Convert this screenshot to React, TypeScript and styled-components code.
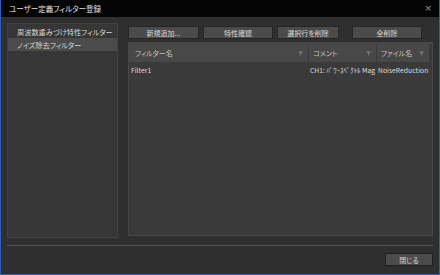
import React from 'react';
import styled, { createGlobalStyle } from 'styled-components';

const Global = createGlobalStyle`
  html, body { margin: 0; padding: 0; background: #2e2e2e; }
  * { box-sizing: border-box; }
  body {
    font-family: "Noto Sans CJK JP", "Noto Sans", sans-serif;
    font-feature-settings: "palt";
    -webkit-font-smoothing: antialiased;
  }
`;

const Window = styled.div`
  width: 440px;
  height: 275px;
  display: flex;
  flex-direction: column;
  background: #2f2f2f;
  border: 1px solid #2c5fae;
  border-top: none;
`;

const TitleBar = styled.div`
  height: 17px;
  flex-shrink: 0;
  background: #050505;
  display: flex;
  align-items: center;
  justify-content: space-between;
  padding: 0 7px 0 8px;
  color: #e2e2e2;
  font-size: 7.5px;
`;

const CloseX = styled.span`
  color: #9a9a9a;
  font-family: "DejaVu Sans", sans-serif;
  font-size: 9px;
  line-height: 1;
`;

const Body = styled.div`
  flex: 1;
  display: flex;
  flex-direction: column;
  padding: 6px 6px 0 6px;
`;

const Main = styled.div`
  height: 215px;
  display: flex;
  gap: 10px;
`;

const SidePanel = styled.div`
  width: 111px;
  background: #363636;
  border: 1px solid #424242;
  padding-top: 1px;
  display: flex;
  flex-direction: column;
`;

const SideItem = styled.div<{ $selected?: boolean }>`
  height: 13px;
  display: flex;
  align-items: center;
  padding-left: 9px;
  font-size: 7.2px;
  color: #d4d4d4;
  background: ${(p) => (p.$selected ? '#4b4b4b' : 'transparent')};
`;

const RightCol = styled.div`
  flex: 1;
  display: flex;
  flex-direction: column;
  padding-top: 3px;
`;

const Toolbar = styled.div`
  height: 13px;
  display: flex;
  gap: 4px;
`;

const ToolButton = styled.div<{ $w: number; $gapBefore?: number }>`
  width: ${(p) => p.$w}px;
  margin-left: ${(p) => p.$gapBefore ?? 0}px;
  height: 13px;
  background: #4b4b4b;
  border: 1px solid #262626;
  display: flex;
  align-items: center;
  justify-content: center;
  font-size: 7px;
  color: #d6d6d6;
`;

const Grid = styled.div`
  margin-top: 3px;
  width: 305px;
  height: 194px;
  background: #3a3a3a;
  border: 1px solid #474747;
  border-top: 2px solid #474747;
  display: flex;
  flex-direction: column;
`;

const HeaderRow = styled.div`
  height: 18px;
  display: flex;
  background: #484848;
  width: 301px;
`;

const HeaderCell = styled.div<{ $w: number }>`
  width: ${(p) => p.$w}px;
  display: flex;
  align-items: center;
  justify-content: space-between;
  padding: 0 5px 0 4px;
  font-size: 7px;
  color: #c4c4c4;
  border-right: 1px solid #3a3a3a;
  &:first-child { padding-left: 6px; }
`;

const Funnel = styled.svg`
  width: 5px;
  height: 5px;
  flex-shrink: 0;
`;

const DataRow = styled.div`
  height: 16px;
  display: flex;
  align-items: center;
  width: 301px;
`;

const DataCell = styled.div<{ $w: number }>`
  width: ${(p) => p.$w}px;
  padding-left: 1px;
  font-size: 6.8px;
  color: #dcdcdc;
  white-space: nowrap;
  &:first-child { padding-left: 2px; }
`;

const Separator = styled.div`
  margin-top: 7px;
  height: 1px;
  background: #545454;
`;

const Footer = styled.div`
  display: flex;
  justify-content: flex-end;
  padding-top: 7px;
`;

const CloseButton = styled(ToolButton)`
  border-color: #1f1f1f;
`;

const cols = [180, 68, 53];

function FilterIcon() {
  return (
    <Funnel viewBox="0 0 5 5">
      <path d="M0 0.5 H5 L3 2.8 V4.8 L2 4.2 V2.8 Z" fill="#7a7a7a" />
    </Funnel>
  );
}

export default function App() {
  return (
    <>
      <Global />
      <Window>
        <TitleBar>
          <span>ユーザー定義フィルター登録</span>
          <CloseX>×</CloseX>
        </TitleBar>
        <Body>
          <Main>
            <SidePanel>
              <SideItem>周波数重みづけ特性フィルター</SideItem>
              <SideItem $selected>ノイズ除去フィルター</SideItem>
            </SidePanel>
            <RightCol>
              <Toolbar>
                <ToolButton $w={71}>新規追加...</ToolButton>
                <ToolButton $w={70}>特性確認</ToolButton>
                <ToolButton $w={62}>選択行を削除</ToolButton>
                <ToolButton $w={70} $gapBefore={9}>全削除</ToolButton>
              </Toolbar>
              <Grid>
                <HeaderRow>
                  <HeaderCell $w={cols[0]}>
                    フィルター名 <FilterIcon />
                  </HeaderCell>
                  <HeaderCell $w={cols[1]}>
                    コメント <FilterIcon />
                  </HeaderCell>
                  <HeaderCell $w={cols[2]}>
                    ファイル名 <FilterIcon />
                  </HeaderCell>
                </HeaderRow>
                <DataRow>
                  <DataCell $w={cols[0]}>Filter1</DataCell>
                  <DataCell $w={cols[1]}>CH1: ﾊﾟﾜｰｽﾍﾟｸﾄﾙ Mag</DataCell>
                  <DataCell $w={cols[2]}>NoiseReduction</DataCell>
                </DataRow>
              </Grid>
            </RightCol>
          </Main>
          <Separator />
          <Footer>
            <CloseButton $w={48}>閉じる</CloseButton>
          </Footer>
        </Body>
      </Window>
    </>
  );
}
